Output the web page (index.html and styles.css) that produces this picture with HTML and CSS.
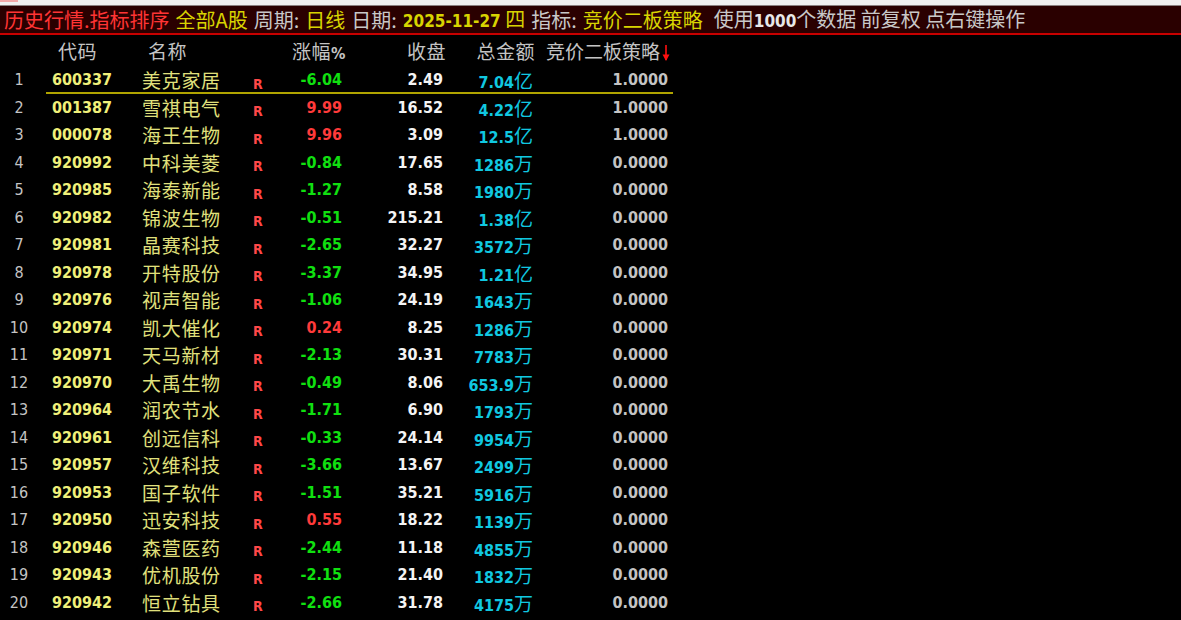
FILE: index.html
```html
<!DOCTYPE html>
<html lang="zh-CN">
<head>
<meta charset="utf-8">
<title>历史行情</title>
<link rel="stylesheet" href="styles.css">
</head>
<body>
<div class="topstrip"><div class="tabmark"></div></div>
<div class="titlebar">
  <span class="t-red">历史行情.指标排序</span>
  <span class="t-yel">全部A股</span>
  <span class="t-gray">周期:</span>
  <span class="t-yel">日线</span>
  <span class="t-gray">日期:</span>
  <span class="t-yel"><b class="num">2025-11-27</b> 四</span>
  <span class="t-gray">指标:</span>
  <span class="t-yel">竞价二板策略</span>
  <span class="t-gray wide">使用<b class="num">1000</b>个数据 前复权 点右键操作</span>
</div>
<div class="table">
  <div class="row head">
    <div></div>
    <div class="h-code">代码</div>
    <div class="h-name">名称</div>
    <div></div>
    <div class="h-chg">涨幅<b class="pct">%</b></div>
    <div class="h-close">收盘</div>
    <div class="h-amt">总金额</div>
    <div class="h-str">竞价二板策略<svg class="arrow" width="8" height="18" viewBox="0 0 8 18"><path d="M4 1V16" stroke="#ff1010" stroke-width="1.6" fill="none"/><path d="M0.5 10.5L4 17L7.5 10.5Z" fill="#ff1010"/></svg></div>
  </div>
  <div id="rows"></div>
</div>
<script src="app.js"></script>
</body>
</html>
```
FILE: styles.css
```css
html, body {
  margin: 0;
  padding: 0;
  background: #000;
  width: 1181px;
  height: 620px;
  overflow: hidden;
}
body {
  font-family: "Noto Sans CJK SC", sans-serif;
}
.topstrip {
  height: 5px;
  background: #f0f0f0;
  border-bottom: 1px solid #8a8080;
}
.tabmark {
  width: 18px;
  height: 2px;
  background: #f2a8a8;
}
.titlebar {
  height: 27px;
  background: #2a0000;
  border-bottom: 2px solid #c80000;
  display: flex;
  align-items: center;
  gap: 6px;
  padding-left: 4px;
  font-size: 20px;
  line-height: 27px;
  white-space: nowrap;
}
.titlebar .wide { margin-left: 5px; }
.num, .pct {
  font-family: "DejaVu Sans Condensed", "DejaVu Sans", sans-serif;
  font-stretch: condensed;
  font-weight: bold;
  font-size: 17px;
}
.t-red { color: #ff3434; }
.t-yel { color: #d8d400; }
.t-gray { color: #c8c8c8; }
.t-gray .num { color: #e8e8e8; }

.table {
  width: 680px;
}
.row {
  display: grid;
  grid-template-columns: 36px 106px 108px 20px 72px 101px 90px 135px;
  height: 27.5px;
  align-items: center;
  white-space: nowrap;
}
.row.head {
  height: 31px;
  color: #c4c4c4;
  font-size: 19px;
  letter-spacing: 0.5px;
}
.head .h-code { padding-left: 22px; }
.head .h-name { padding-left: 6px; }
.head .h-chg { text-align: right; margin-right: -4px; }
.head .pct { font-size: 16px; color: #c4c4c4; }
.head .h-close { text-align: right; margin-right: -3px; }
.head .h-amt { text-align: right; margin-right: -2px; }
.head .h-str {
  text-align: right;
  margin-right: -2px;
  letter-spacing: 0;
  display: flex;
  justify-content: flex-end;
  align-items: center;
}
.arrow {
  margin-left: 2px;
  margin-top: 4px;
}
.row.sel {
  background: linear-gradient(#b0a400, #b0a400) no-repeat 46px 100% / 627px 2px;
}
.c-no {
  text-align: center;
  color: #c4c4c4;
  font-family: "DejaVu Sans Condensed", "DejaVu Sans", sans-serif;
  font-stretch: condensed;
  font-size: 16px;
  padding-left: 2px;
}
.c-code {
  color: #f0f07a;
  font-family: "DejaVu Sans Condensed", "DejaVu Sans", sans-serif;
  font-stretch: condensed;
  font-weight: bold;
  font-size: 16px;
  padding-left: 16px;
}
.c-name {
  color: #e0e07c;
  font-size: 19px;
  letter-spacing: 0.7px;
}
.c-r {
  color: #ff4848;
  font-family: "DejaVu Sans Condensed", "DejaVu Sans", sans-serif;
  font-stretch: condensed;
  font-weight: bold;
  font-size: 14px;
  padding-left: 3px;
  padding-top: 8px;
}
.c-chg, .c-close, .c-amt, .c-str {
  text-align: right;
  font-family: "DejaVu Sans Condensed", "DejaVu Sans", "Noto Sans CJK SC", sans-serif;
  font-stretch: condensed;
  font-weight: bold;
  font-size: 16px;
}
.c-chg.up { color: #ff3a3a; }
.c-chg.dn { color: #10e010; }
.c-close { color: #f4f4f4; }
.c-amt { color: #10c8e0; }
.c-amt .unit {
  font-family: "Noto Sans CJK SC", sans-serif;
  font-weight: normal;
  font-size: 19px;
}
.c-str { color: #c4c4c4; }
```
FILE: app.js
```js
const data = [
  ["600337","美克家居","-6.04","2.49","7.04","亿","1.0000"],
  ["001387","雪祺电气","9.99","16.52","4.22","亿","1.0000"],
  ["000078","海王生物","9.96","3.09","12.5","亿","1.0000"],
  ["920992","中科美菱","-0.84","17.65","1286","万","0.0000"],
  ["920985","海泰新能","-1.27","8.58","1980","万","0.0000"],
  ["920982","锦波生物","-0.51","215.21","1.38","亿","0.0000"],
  ["920981","晶赛科技","-2.65","32.27","3572","万","0.0000"],
  ["920978","开特股份","-3.37","34.95","1.21","亿","0.0000"],
  ["920976","视声智能","-1.06","24.19","1643","万","0.0000"],
  ["920974","凯大催化","0.24","8.25","1286","万","0.0000"],
  ["920971","天马新材","-2.13","30.31","7783","万","0.0000"],
  ["920970","大禹生物","-0.49","8.06","653.9","万","0.0000"],
  ["920964","润农节水","-1.71","6.90","1793","万","0.0000"],
  ["920961","创远信科","-0.33","24.14","9954","万","0.0000"],
  ["920957","汉维科技","-3.66","13.67","2499","万","0.0000"],
  ["920953","国子软件","-1.51","35.21","5916","万","0.0000"],
  ["920950","迅安科技","0.55","18.22","1139","万","0.0000"],
  ["920946","森萱医药","-2.44","11.18","4855","万","0.0000"],
  ["920943","优机股份","-2.15","21.40","1832","万","0.0000"],
  ["920942","恒立钻具","-2.66","31.78","4175","万","0.0000"]
];
const root = document.getElementById("rows");
data.forEach((d, i) => {
  const row = document.createElement("div");
  row.className = "row" + (i === 0 ? " sel" : "");
  const dir = d[2].startsWith("-") ? "dn" : "up";
  row.innerHTML =
    '<div class="c-no">' + (i + 1) + '</div>' +
    '<div class="c-code">' + d[0] + '</div>' +
    '<div class="c-name">' + d[1] + '</div>' +
    '<div class="c-r">R</div>' +
    '<div class="c-chg ' + dir + '">' + d[2] + '</div>' +
    '<div class="c-close">' + d[3] + '</div>' +
    '<div class="c-amt">' + d[4] + '<span class="unit">' + d[5] + '</span></div>' +
    '<div class="c-str">' + d[6] + '</div>';
  root.appendChild(row);
});
```
